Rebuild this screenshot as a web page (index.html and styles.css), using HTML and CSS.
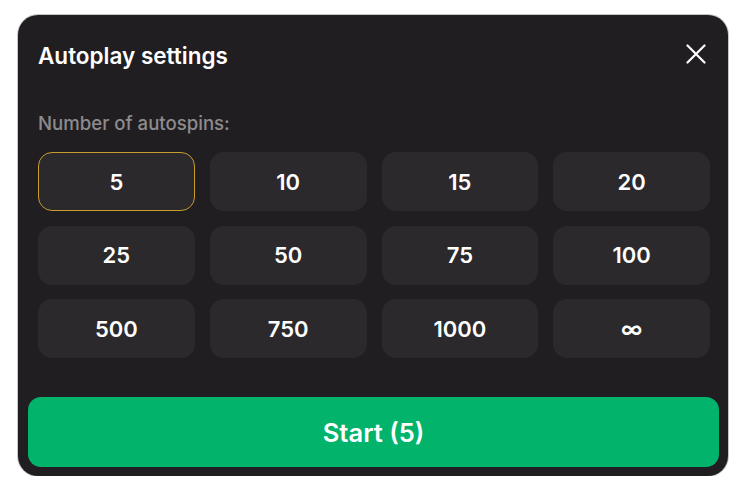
FILE: index.html
```html
<!DOCTYPE html>
<html>
<head>
<meta charset="utf-8">
<link rel="stylesheet" href="styles.css">
</head>
<body>
<div class="modal">
  <div class="header">
    <h1 class="title">Autoplay settings</h1>
    <button class="close" aria-label="Close">
      <svg width="20" height="20" viewBox="0 0 20 20"><path d="M1.5 1.5 L18.5 18.5 M18.5 1.5 L1.5 18.5" stroke="#fff" stroke-width="2.2" stroke-linecap="round"/></svg>
    </button>
  </div>
  <div class="label">Number of autospins:</div>
  <div class="grid">
    <button class="opt selected">5</button>
    <button class="opt">10</button>
    <button class="opt">15</button>
    <button class="opt">20</button>
    <button class="opt">25</button>
    <button class="opt">50</button>
    <button class="opt">75</button>
    <button class="opt">100</button>
    <button class="opt">500</button>
    <button class="opt">750</button>
    <button class="opt">1000</button>
    <button class="opt">∞</button>
  </div>
  <button class="start">Start (5)</button>
</div>
</body>
</html>
```
FILE: styles.css
```css
* { box-sizing: border-box; }
html, body { margin: 0; padding: 0; background: #ffffff; }
body {
  font-family: Inter, "Noto Sans", sans-serif;
  padding: 15px 0 0 18px;
}
.modal {
  width: 710px;
  height: 461px;
  background: #201e21;
  border-radius: 20px;
  box-shadow: 0 0 0 1px rgba(90, 90, 90, 0.35);
  display: flex;
  flex-direction: column;
  padding: 0 9px 9px 10px;
}
.header {
  display: flex;
  justify-content: space-between;
  align-items: flex-start;
  padding: 28px 13px 0 10px;
}
.title {
  margin: 0;
  color: #ffffff;
  font-size: 22.5px;
  font-weight: 600;
  line-height: 26px;
  letter-spacing: 0;
}
.close {
  background: none;
  border: 0;
  padding: 0;
  width: 20px;
  height: 20px;
  margin-top: 1px;
  display: flex;
}
.label {
  color: #8d8b8e;
  font-size: 18.6px;
  font-weight: 500;
  padding-left: 10px;
  margin-top: 43px;
  line-height: 22px;
}
.grid {
  display: grid;
  grid-template-columns: repeat(4, 1fr);
  grid-auto-rows: 59px;
  column-gap: 15px;
  row-gap: 14.5px;
  margin: 18px 9px 0 10px;
}
.opt {
  background: #2b292c;
  border: 1.5px solid transparent;
  border-radius: 14px;
  color: #ffffff;
  font-family: Inter, "Noto Sans", sans-serif;
  font-size: 22px;
  font-weight: 600;
  padding: 0;
}
.opt.selected {
  border-color: #c89d2c;
}
.start {
  margin-top: auto;
  height: 70px;
  border: 0;
  border-radius: 13px;
  background: #02b36b;
  color: #ffffff;
  font-family: Inter, "Noto Sans", sans-serif;
  font-size: 25.5px;
  font-weight: 600;
}
```
